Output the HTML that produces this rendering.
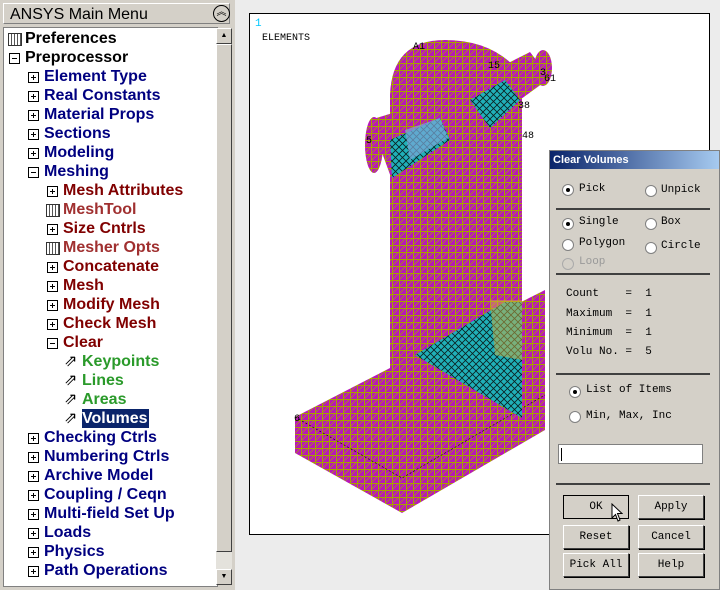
<!DOCTYPE html>
<html><head><style>
body{margin:0;width:720px;height:590px;background:#ececec;position:relative;overflow:hidden;font-family:"Liberation Sans",sans-serif}
.abs{position:absolute}
#left{left:0;top:0;width:235px;height:590px;background:#d4d0c8}
#title{left:3px;top:3px;width:227px;height:21px;border:1px solid #fff;border-right-color:#808080;border-bottom-color:#808080;font-size:16px;line-height:21px;padding-left:6px;box-sizing:border-box}
#tree{left:3px;top:27px;width:213px;height:558px;background:#fff;border:1px solid #808080}
#sb{left:216px;top:28px;width:16px;height:557px;background:#e4e2dc}
.it{position:absolute;font-weight:bold;font-size:16px;white-space:nowrap;line-height:19px}
.bx{position:absolute;width:9px;height:9px;border:1px solid #000;background:#fff}
.bx:before{content:"";position:absolute;left:2px;top:4px;width:5px;height:1px;background:#000}
.bx.p:after{content:"";position:absolute;left:4px;top:2px;width:1px;height:5px;background:#000}
.n{color:#000080}.r{color:#800000}.g{color:#2a9a2a}
#dlg{left:549px;top:150px;width:171px;height:440px;background:#d4d0c8;border:1px solid #808080;box-sizing:border-box}
.mono{font-family:"Liberation Mono",monospace;font-size:11px;position:absolute;white-space:pre}
.rad{position:absolute;width:10px;height:10px;border-radius:50%;background:#fff;border:1px solid #808080}
.rad.on:after{content:"";position:absolute;left:3px;top:3px;width:4px;height:4px;border-radius:50%;background:#000}
.sep{position:absolute;left:6px;width:154px;height:2px;background:#404040}
.btn{position:absolute;width:66px;height:24px;border:1px solid #404040;border-top-color:#fff;border-left-color:#fff;box-sizing:border-box;font-family:"Liberation Mono",monospace;font-size:11px;text-align:center;line-height:22px;box-shadow:1px 1px 0 #000}
</style></head><body>
<div id="left" class="abs">
<div id="title" class="abs">ANSYS Main Menu</div>
<div class="abs" style="left:213px;top:5px;width:15px;height:15px;border:1px solid #000;border-radius:50%;font-size:10px;text-align:center;line-height:13px">︽</div>
<div id="tree" class="abs"></div>
<div id="sb" class="abs">
 <div class="abs" style="left:0;top:0;width:16px;height:16px;background:#d4d0c8;border:1px solid #fff;border-right-color:#404040;border-bottom-color:#404040;box-sizing:border-box;font-size:7px;text-align:center;line-height:14px">▲</div>
 <div class="abs" style="left:0;top:16px;width:16px;height:508px;background:#d4d0c8;border:1px solid #fff;border-right-color:#404040;border-bottom-color:#404040;box-sizing:border-box"></div>
 <div class="abs" style="left:0;top:541px;width:16px;height:16px;background:#d4d0c8;border:1px solid #fff;border-right-color:#404040;border-bottom-color:#404040;box-sizing:border-box;font-size:7px;text-align:center;line-height:14px">▼</div>
</div>
<div class="abs" style="left:8px;top:33px;width:12px;height:11px;background:repeating-linear-gradient(90deg,#fff 0 2px,#555 2px 3px),#777;border:1px solid #333"></div>
<div class="it" style="left:25px;top:29px;color:#000">Preferences</div>
<div class="bx" style="left:9px;top:53px"></div><div class="it" style="left:25px;top:48px;color:#000">Preprocessor</div>
<div class="bx p" style="left:28px;top:72px"></div><div class="it n" style="left:44px;top:67px">Element Type</div>
<div class="bx p" style="left:28px;top:91px"></div><div class="it n" style="left:44px;top:86px">Real Constants</div>
<div class="bx p" style="left:28px;top:110px"></div><div class="it n" style="left:44px;top:105px">Material Props</div>
<div class="bx p" style="left:28px;top:129px"></div><div class="it n" style="left:44px;top:124px">Sections</div>
<div class="bx p" style="left:28px;top:148px"></div><div class="it n" style="left:44px;top:143px">Modeling</div>
<div class="bx" style="left:28px;top:167px"></div><div class="it n" style="left:44px;top:162px">Meshing</div>
<div class="bx p" style="left:47px;top:186px"></div><div class="it r" style="left:63px;top:181px">Mesh Attributes</div>
<div class="abs" style="left:46px;top:204px;width:12px;height:11px;background:repeating-linear-gradient(90deg,#fff 0 2px,#555 2px 3px),#777;border:1px solid #333"></div><div class="it" style="left:63px;top:200px;color:#a03030">MeshTool</div>
<div class="bx p" style="left:47px;top:224px"></div><div class="it r" style="left:63px;top:219px">Size Cntrls</div>
<div class="abs" style="left:46px;top:242px;width:12px;height:11px;background:repeating-linear-gradient(90deg,#fff 0 2px,#555 2px 3px),#777;border:1px solid #333"></div><div class="it" style="left:63px;top:238px;color:#a03030">Mesher Opts</div>
<div class="bx p" style="left:47px;top:262px"></div><div class="it r" style="left:63px;top:257px">Concatenate</div>
<div class="bx p" style="left:47px;top:281px"></div><div class="it r" style="left:63px;top:276px">Mesh</div>
<div class="bx p" style="left:47px;top:300px"></div><div class="it r" style="left:63px;top:295px">Modify Mesh</div>
<div class="bx p" style="left:47px;top:319px"></div><div class="it r" style="left:63px;top:314px">Check Mesh</div>
<div class="bx" style="left:47px;top:338px"></div><div class="it r" style="left:63px;top:333px">Clear</div>
<div class="it" style="left:64px;top:352px;font-weight:normal">⇗</div><div class="it g" style="left:82px;top:352px">Keypoints</div>
<div class="it" style="left:64px;top:371px;font-weight:normal">⇗</div><div class="it g" style="left:82px;top:371px">Lines</div>
<div class="it" style="left:64px;top:390px;font-weight:normal">⇗</div><div class="it g" style="left:82px;top:390px">Areas</div>
<div class="it" style="left:64px;top:409px;font-weight:normal">⇗</div><div class="it" style="left:82px;top:409px;background:#0a246a;color:#fff;padding-right:1px">Volumes</div>
<div class="bx p" style="left:28px;top:433px"></div><div class="it n" style="left:44px;top:428px">Checking Ctrls</div>
<div class="bx p" style="left:28px;top:452px"></div><div class="it n" style="left:44px;top:447px">Numbering Ctrls</div>
<div class="bx p" style="left:28px;top:471px"></div><div class="it n" style="left:44px;top:466px">Archive Model</div>
<div class="bx p" style="left:28px;top:490px"></div><div class="it n" style="left:44px;top:485px">Coupling / Ceqn</div>
<div class="bx p" style="left:28px;top:509px"></div><div class="it n" style="left:44px;top:504px">Multi-field Set Up</div>
<div class="bx p" style="left:28px;top:528px"></div><div class="it n" style="left:44px;top:523px">Loads</div>
<div class="bx p" style="left:28px;top:547px"></div><div class="it n" style="left:44px;top:542px">Physics</div>
<div class="bx p" style="left:28px;top:566px"></div><div class="it n" style="left:44px;top:561px">Path Operations</div>
</div>

<svg class="abs" style="left:0;top:0" width="720" height="590">
<defs>
<pattern id="m" width="7" height="7" patternUnits="userSpaceOnUse"><rect width="7" height="7" fill="#b818b8"/><path d="M0 0H7M0 0V7" stroke="#a8a000" stroke-width="2"/><path d="M1 6L6 1" stroke="#a8a000" stroke-width="0.7"/></pattern>
<pattern id="t" width="7" height="7" patternUnits="userSpaceOnUse"><rect width="7" height="7" fill="#20b0b8"/><path d="M0 0L7 7M7 0L0 7" stroke="#0a2020" stroke-width="0.8"/></pattern>
</defs>
<rect x="249.5" y="13.5" width="460" height="521" fill="#fff" stroke="#000"/>
<text x="255" y="26" font-family="Liberation Mono" font-size="11" fill="#00c8ff">1</text>
<text x="262" y="40" font-family="Liberation Mono" font-size="10" fill="#000">ELEMENTS</text>
<polygon points="295,417 390,368 545,290 545,430 402,513 295,453" fill="url(#m)"/>
<path d="M295,417 L402,478 L545,395" stroke="#000" stroke-width="0.6" fill="none" stroke-dasharray="2 2"/>
<path d="M390,395 L390,95 Q392,40 445,40 Q495,40 522,75 L522,395 Z" fill="url(#m)"/>
<polygon points="415,355 505,302 522,302 522,418" fill="url(#t)"/>
<polygon points="490,300 522,300 522,360 495,355" fill="#d0b040" opacity="0.5"/>
<polygon points="465,85 530,52 550,78 495,118" fill="url(#m)"/>
<polygon points="470,100 505,80 520,100 490,128" fill="url(#t)"/>
<ellipse cx="543" cy="68" rx="9" ry="18" fill="url(#m)"/>
<polygon points="370,120 450,95 460,135 392,180" fill="url(#m)"/>
<polygon points="390,140 440,118 450,140 392,178" fill="url(#t)"/>
<polygon points="405,130 440,118 448,138 410,160" fill="#7aa8d8" opacity="0.7"/>
<ellipse cx="374" cy="145" rx="9" ry="28" fill="url(#m)"/>
<g font-family="Liberation Mono" font-size="10" fill="#000">
<text x="413" y="49">A1</text><text x="488" y="68">15</text><text x="540" y="75">3</text><text x="544" y="81">61</text><text x="518" y="108">38</text><text x="522" y="138">48</text><text x="294" y="421">6</text><text x="366" y="143">5</text>
</g>
</svg>

<div id="dlg" class="abs">
<div class="abs" style="left:0;top:0;width:169px;height:18px;background:linear-gradient(90deg,#0a246a,#a6caf0);color:#fff;font-weight:bold;font-size:11px;line-height:18px;padding-left:3px;box-sizing:border-box">Clear Volumes</div>
<div class="rad on" style="left:12px;top:33px"></div><div class="mono" style="left:29px;top:32px">Pick</div>
<div class="rad" style="left:95px;top:34px"></div><div class="mono" style="left:111px;top:33px">Unpick</div>
<div class="sep" style="top:57px"></div>
<div class="rad on" style="left:12px;top:67px"></div><div class="mono" style="left:29px;top:65px">Single</div>
<div class="rad" style="left:95px;top:67px"></div><div class="mono" style="left:111px;top:65px">Box</div>
<div class="rad" style="left:12px;top:88px"></div><div class="mono" style="left:29px;top:86px">Polygon</div>
<div class="rad" style="left:95px;top:91px"></div><div class="mono" style="left:111px;top:89px">Circle</div>
<div class="rad" style="left:12px;top:107px;background:#d4d0c8;border-color:#aaa"></div><div class="mono" style="left:29px;top:105px;color:#999">Loop</div>
<div class="sep" style="top:122px"></div>
<div class="mono" style="left:16px;top:137px">Count    =  1</div>
<div class="mono" style="left:16px;top:157px">Maximum  =  1</div>
<div class="mono" style="left:16px;top:176px">Minimum  =  1</div>
<div class="mono" style="left:16px;top:195px">Volu No. =  5</div>
<div class="sep" style="top:222px"></div>
<div class="rad on" style="left:19px;top:235px"></div><div class="mono" style="left:36px;top:233px">List of Items</div>
<div class="rad" style="left:19px;top:260px"></div><div class="mono" style="left:36px;top:259px">Min, Max, Inc</div>
<div class="abs" style="left:8px;top:293px;width:145px;height:20px;background:#fff;border:1px solid #808080;box-sizing:border-box"><div class="abs" style="left:2px;top:3px;width:1px;height:13px;background:#000"></div></div>
<div class="sep" style="top:332px"></div>
<div class="btn" style="left:13px;top:344px;border:1px solid #000;box-shadow:none">OK</div>
<div class="btn" style="left:88px;top:344px">Apply</div>
<div class="btn" style="left:13px;top:374px">Reset</div>
<div class="btn" style="left:88px;top:374px">Cancel</div>
<div class="btn" style="left:13px;top:402px">Pick All</div>
<div class="btn" style="left:88px;top:402px">Help</div>
<svg class="abs" style="left:61px;top:352px" width="12" height="20"><path d="M1 1V15L4.5 11.5L7 18L9 17L6.5 10.5H11Z" fill="#fff" stroke="#000" stroke-width="1"/></svg>
</div>
</body></html>
